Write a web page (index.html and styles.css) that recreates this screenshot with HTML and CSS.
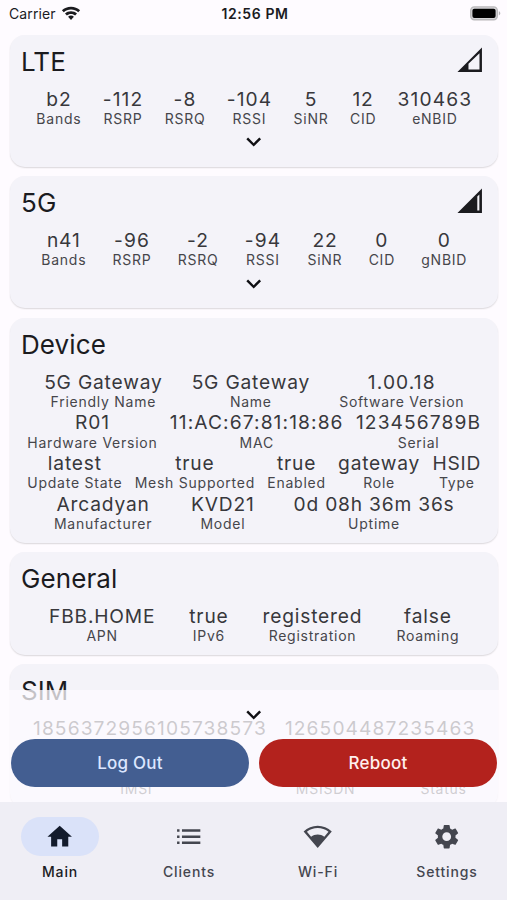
FILE: index.html
```html
<!DOCTYPE html>
<html lang="en">
<head>
<meta charset="utf-8">
<title>Gateway</title>
<link rel="stylesheet" href="styles.css">
</head>
<body>
<div class="screen">
  <header class="status">
    <div class="carrier">Carrier
      <svg width="20" height="15" viewBox="0 0 20 15"><path d="M10 .7C6.500 .7 3.300 2 .9 4.200l1.900 2C4.700 4.400 7.200 3.400 10 3.400s5.300 1 7.200 2.800l1.900-2C16.700 2 13.500 .7 10 .7z"/><path d="M10 5.200c-2.300 0-4.400.9-6 2.300l1.900 2C7 8.500 8.400 7.900 10 7.900s3 .6 4.100 1.600l1.900-2C14.400 6.100 12.300 5.200 10 5.200z"/><path d="M10 9.600c-1.100 0-2.100.4-2.900 1.100L10 13.900l2.900-3.200C12.100 10 11.100 9.600 10 9.600z"/></svg>
    </div>
    <div class="clock">12:56 PM</div>
    <div class="power">
      <svg width="31" height="15" viewBox="0 0 31 15"><rect x=".7" y=".9" width="26.600" height="12.800" rx="3.600" fill="#d6d5d8" stroke="#b9b8ba" stroke-width="1.400"/><rect x="2.400" y="2.700" width="23.200" height="9.200" rx="2" fill="#000"/><path d="M28.800 5.200v4.200c.9-.4 1.500-1.200 1.500-2.100s-.6-1.700-1.500-2.100z" fill="#b4b3b5"/></svg>
    </div>
  </header>

  <main class="cards">
    <section class="card">
      <div class="head"><h2>LTE</h2>
        <svg class="signal" viewBox="0 0 24 24"><path fill-rule="evenodd" d="M2 22h20V2zM20 20h-9v-4.600l9-8.600z"/></svg></div>
      <div class="row">
        <div class="cell"><b>b2</b><span>Bands</span></div>
        <div class="cell"><b class="num">-112</b><span>RSRP</span></div>
        <div class="cell"><b class="num">-8</b><span>RSRQ</span></div>
        <div class="cell"><b class="num">-104</b><span>RSSI</span></div>
        <div class="cell"><b>5</b><span>SiNR</span></div>
        <div class="cell"><b>12</b><span>CID</span></div>
        <div class="cell"><b class="num">310463</b><span>eNBID</span></div>
      </div>
      <div class="more"><svg viewBox="0 0 24 24"><path d="M7.410 8.590 12 13.170l4.590-4.580L18 10l-6 6-6-6z"/></svg></div>
    </section>

    <section class="card">
      <div class="head"><h2>5G</h2>
        <svg class="signal" viewBox="0 0 24 24"><path fill-rule="evenodd" d="M2 22h20V2zM19.900 20h-1.700V8.600l1.700-1.700z"/></svg></div>
      <div class="row">
        <div class="cell"><b>n41</b><span>Bands</span></div>
        <div class="cell"><b class="num">-96</b><span>RSRP</span></div>
        <div class="cell"><b class="num">-2</b><span>RSRQ</span></div>
        <div class="cell"><b class="num">-94</b><span>RSSI</span></div>
        <div class="cell"><b>22</b><span>SiNR</span></div>
        <div class="cell"><b>0</b><span>CID</span></div>
        <div class="cell"><b>0</b><span>gNBID</span></div>
      </div>
      <div class="more"><svg viewBox="0 0 24 24"><path d="M7.410 8.590 12 13.170l4.590-4.580L18 10l-6 6-6-6z"/></svg></div>
    </section>

    <section class="card">
      <div class="head"><h2>Device</h2></div>
      <div class="row">
        <div class="cell"><b>5G Gateway</b><span>Friendly Name</span></div>
        <div class="cell"><b>5G Gateway</b><span>Name</span></div>
        <div class="cell"><b class="num">1.00.18</b><span>Software Version</span></div>
      </div>
      <div class="row">
        <div class="cell"><b>R01</b><span>Hardware Version</span></div>
        <div class="cell"><b class="num">11:AC:67:81:18:86</b><span>MAC</span></div>
        <div class="cell"><b class="num">123456789B</b><span>Serial</span></div>
      </div>
      <div class="row">
        <div class="cell"><b>latest</b><span>Update State</span></div>
        <div class="cell"><b>true</b><span>Mesh Supported</span></div>
        <div class="cell"><b>true</b><span>Enabled</span></div>
        <div class="cell"><b>gateway</b><span>Role</span></div>
        <div class="cell"><b>HSID</b><span>Type</span></div>
      </div>
      <div class="row">
        <div class="cell"><b>Arcadyan</b><span>Manufacturer</span></div>
        <div class="cell"><b>KVD21</b><span>Model</span></div>
        <div class="cell"><b>0d 08h 36m 36s</b><span>Uptime</span></div>
      </div>
    </section>

    <section class="card">
      <div class="head"><h2>General</h2></div>
      <div class="row">
        <div class="cell"><b>FBB.HOME</b><span>APN</span></div>
        <div class="cell"><b>true</b><span>IPv6</span></div>
        <div class="cell"><b>registered</b><span>Registration</span></div>
        <div class="cell"><b>false</b><span>Roaming</span></div>
      </div>
    </section>

    <section class="card">
      <div class="head"><h2>SIM</h2></div>
      <div class="row">
        <div class="cell"><b class="num">1856372956105738573</b><span></span></div>
        <div class="cell"><b class="num">126504487235463</b><span></span></div>
      </div>
      <div class="row">
        <div class="cell imsi"><b></b><span>IMSI</span></div>
        <div class="cell msisdn"><b></b><span>MSISDN</span></div>
        <div class="cell"><b></b><span>Status</span></div>
      </div>
    </section>
  </main>

  <div class="sheet">
    <div class="more"><svg viewBox="0 0 24 24"><path d="M7.410 8.590 12 13.170l4.590-4.580L18 10l-6 6-6-6z"/></svg></div>
    <div class="actions">
      <button class="logout">Log Out</button>
      <button class="reboot">Reboot</button>
    </div>
  </div>

  <nav class="tabs">
    <a class="tab active"><i><svg viewBox="0 0 24 24"><path d="M10 20v-6h4v6h5v-8h3L12 3 2 12h3v8z"/></svg></i>Main</a>
    <a class="tab"><i><svg viewBox="0 0 24 24"><path d="M2.500 6h2v2h-2zM2.500 11h2v2h-2zM2.500 16h2v2h-2zM6.500 6h15v2h-15zM6.500 11h15v2h-15zM6.500 16h15v2h-15z"/></svg></i>Clients</a>
    <a class="tab"><i><svg viewBox="0 0 24 24"><path fill-rule="evenodd" d="M12 3C7.700 3 3.700 4.700.5 7.700L12 21.300 23.500 7.700C20.300 4.700 16.300 3 12 3zM3.200 8C5.800 6.100 8.800 5 12 5s6.200 1.100 8.800 3l-3.400 4C15.800 10.900 14 10.300 12 10.300s-3.800.6-5.400 1.700z"/></svg></i>Wi-Fi</a>
    <a class="tab"><i><svg viewBox="0 0 24 24"><path d="M19.140 12.940c.04-.3.060-.61.060-.94 0-.32-.02-.64-.07-.94l2.030-1.580c.18-.14.230-.41.120-.61l-1.920-3.320c-.12-.22-.37-.29-.59-.22l-2.390.96c-.5-.38-1.030-.7-1.620-.94l-.36-2.540c-.04-.24-.24-.41-.48-.41h-3.840c-.24 0-.43.170-.47.410l-.36 2.540c-.59.240-1.130.570-1.620.940l-2.390-.96c-.22-.08-.47 0-.59.220L2.740 8.870c-.12.210-.08.470.120.610l2.030 1.580c-.05.300-.09.630-.09.940s.02.640.070.940l-2.030 1.580c-.18.140-.23.410-.12.610l1.920 3.320c.12.220.370.290.590.220l2.390-.96c.5.380 1.030.700 1.620.940l.36 2.540c.05.240.240.410.480.410h3.840c.24 0 .44-.17.470-.41l.36-2.540c.59-.24 1.130-.56 1.620-.94l2.390.96c.22.080.470 0 .59-.22l1.920-3.320c.12-.22.070-.47-.12-.61l-2.010-1.580zM12 15.600c-1.980 0-3.600-1.620-3.600-3.600s1.620-3.600 3.600-3.600 3.600 1.620 3.600 3.600-1.620 3.600-3.600 3.600z"/></svg></i>Settings</a>
  </nav>
</div>
</body>
</html>
```
FILE: styles.css
```css
* { box-sizing: border-box; }
body {
  margin: 0;
  font-family: Inter, "Liberation Sans", sans-serif;
  background: #fefbff;
  color: #1b1b1f;
}
.screen {
  position: relative;
  display: flex;
  flex-direction: column;
  width: 507px;
  height: 900px;
  overflow: hidden;
}
svg { display: block; fill: currentColor; }

.status {
  display: grid;
  grid-template-columns: 1fr auto 1fr;
  align-items: center;
  flex: none;
  height: 35px;
  padding: 0 6px 8px 9px;
  font-size: 14px;
}
.carrier { display: flex; align-items: center; gap: 5px; letter-spacing: .1px; }
.clock { font-weight: 600; letter-spacing: .6px; }
.power { justify-self: end; }

.cards {
  display: flex;
  flex-direction: column;
  flex: 1;
  min-height: 0;
  overflow: hidden;
  gap: 9.700px;
  padding: 0 9.500px 0 10px;
}
.card {
  flex: none;
  padding: 10px 4px;
  border-radius: 15px;
  background: #f4f3f9;
  box-shadow: 0 1px 1.500px rgba(0, 0, 0, .14);
}
.head {
  display: flex;
  justify-content: space-between;
  height: 41.600px;
  padding: 0 9px 0 7px;
}
h2 {
  margin: 0;
  font-size: 26px;
  font-weight: 400;
  line-height: 33px;
  letter-spacing: .1px;
}
.signal { width: 29.400px; height: 29.400px; }
.row { display: flex; justify-content: space-evenly; padding-left: 1px; }
.cell { display: flex; flex-direction: column; align-items: center; white-space: nowrap; }
.cell b {
  height: 23.400px;
  font-size: 19.200px;
  font-weight: 400;
  line-height: 25px;
  letter-spacing: .8px;
  color: #38383c;
}
.cell .num { letter-spacing: 1.100px; }
.cell span {
  height: 17.400px;
  font-size: 14px;
  line-height: 17.400px;
  letter-spacing: .75px;
  color: #46464b;
}
.imsi { width: 189px; }
.msisdn { width: 136px; }
.more { display: flex; justify-content: center; height: 29.400px; }
.more svg { width: 29.400px; height: 29.400px; color: #101014; }

.sheet {
  position: absolute;
  left: 0;
  right: 0;
  bottom: 98px;
  height: 112px;
  padding: 9.600px 10px 0 11px;
  background: rgba(254, 251, 255, .75);
}
.actions { display: flex; gap: 10px; margin-top: 10px; }
.actions button {
  flex: 1;
  height: 48.500px;
  border: 0;
  border-radius: 25px;
  font: 500 17px Inter, "Liberation Sans", sans-serif;
  letter-spacing: .2px;
}
.logout { background: #435e91; color: #dce6ff; }
.reboot { background: #b3221d; color: #fff0ee; }

.tabs {
  display: flex;
  justify-content: space-between;
  flex: none;
  height: 98px;
  padding: 15px 21px 0;
  background: #efeef5;
  color: #44464f;
}
.tab {
  display: flex;
  flex-direction: column;
  align-items: center;
  width: 78px;
  font-size: 14px;
  font-weight: 500;
  line-height: 18px;
  letter-spacing: .85px;
  white-space: nowrap;
}
.tab i {
  display: flex;
  align-items: center;
  justify-content: center;
  width: 78px;
  height: 39px;
  margin-bottom: 7px;
  border-radius: 20px;
}
.tab svg { width: 29.400px; height: 29.400px; }
.active { color: #1b1b1f; }
.active i { background: #dae2f9; color: #131b2c; }
```
